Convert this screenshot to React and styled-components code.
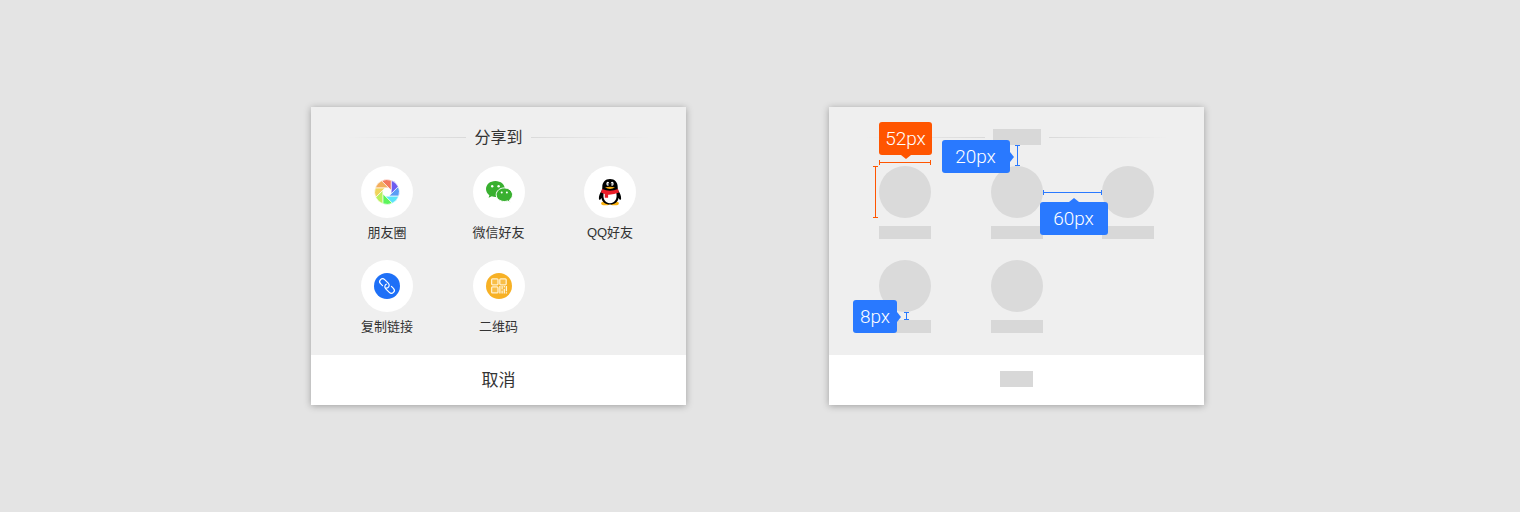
import React from "react";
import styled, { createGlobalStyle, css } from "styled-components";

const GlobalStyle = createGlobalStyle`
  *, *::before, *::after { box-sizing: border-box; }
  body {
    margin: 0;
    background: #e4e4e4;
    color: #333;
    font-family: "Liberation Sans", "Noto Sans CJK SC", sans-serif;
  }
`;

const BLUE = "#2979ff";
const ORANGE = "#ff5500";

const Page = styled.main`
  min-height: 100vh;
  padding: 24px 29px 24px 24px;
  display: flex;
  flex-wrap: wrap;
  align-items: center;
  align-content: center;
  justify-content: center;
  gap: 48px 143px;
`;

const Sheet = styled.section`
  flex: 0 1 375px;
  background: #efefef;
  box-shadow: 0 1px 7px rgba(0, 0, 0, 0.3);
`;

const SheetHeader = styled.header`
  display: flex;
  align-items: center;
  justify-content: center;
  gap: 8px;
  height: 59px;
  padding-top: 1px;
`;

const Rule = styled.span`
  flex: 0 1 120px;
  height: 1px;
  background: linear-gradient(
    ${(p) => (p.$side === "left" ? "to right" : "to left")},
    rgba(216, 216, 216, 0),
    #dadada
  );
`;

const Title = styled.h2`
  margin: 0;
  padding-top: 2px;
  font-size: 16px;
  line-height: 16px;
  font-weight: 400;
`;

const Items = styled.ul`
  list-style: none;
  margin: 0;
  padding: 0 50px 22px;
  display: grid;
  grid-template-columns: repeat(3, 52px);
  justify-content: space-between;
  row-gap: 21px;
`;

const column = css`
  display: flex;
  flex-direction: column;
  align-items: center;
  gap: 8px;
`;

const ShareButton = styled.button`
  ${column}
  width: 52px;
  padding: 0;
  border: 0;
  background: none;
  color: inherit;
  font: inherit;
  font-size: 13px;
  line-height: 13px;
  white-space: nowrap;
  cursor: pointer;
`;

const IconDisc = styled.span`
  width: 52px;
  height: 52px;
  border-radius: 50%;
  background: #fff;
  display: flex;
  align-items: center;
  justify-content: center;
`;

const Icon = styled.svg.attrs({ viewBox: "-14 -14 28 28", "aria-hidden": true })`
  display: block;
  width: 28px;
  height: 28px;
`;

const CancelButton = styled.button`
  display: block;
  width: 100%;
  height: 50px;
  padding: 2px 0 0;
  border: 0;
  background: #fff;
  color: inherit;
  font: inherit;
  font-size: 17px;
  line-height: 48px;
  cursor: pointer;
`;

const SpecItem = styled.li`
  ${column}
`;

const SpecFooter = styled.footer`
  height: 50px;
  padding-top: 16px;
  background: #fff;
  display: flex;
  justify-content: center;
  align-items: flex-start;
`;

const Block = styled.div`
  width: ${(p) => p.$w}px;
  height: ${(p) => p.$h}px;
  background: #d8d8d8;
`;

const Disc = styled.div`
  position: relative;
  width: 52px;
  height: 52px;
  border-radius: 50%;
  background: #dadada;
`;

/* Dimension line with end caps, laid over the wireframe */
const Measure = styled.span`
  position: absolute;
  z-index: 1;
  left: ${(p) => p.$x}px;
  top: ${(p) => p.$y}px;
  color: ${(p) => p.$color};
  ${(p) =>
    p.$vertical
      ? css`
          width: 5px;
          height: ${p.$length}px;
          border-top: 1px solid;
          border-bottom: 1px solid;
          background: linear-gradient(currentColor, currentColor) center / 1px 100% no-repeat;
        `
      : css`
          width: ${p.$length}px;
          height: 5px;
          border-left: 1px solid;
          border-right: 1px solid;
          background: linear-gradient(currentColor, currentColor) center / 100% 1px no-repeat;
        `}
`;

const arrows = {
  down: css`top: 100%; left: calc(50% - 5px); border-width: 4px 5px 0; border-top-color: currentColor;`,
  up: css`bottom: 100%; left: calc(50% - 5px); border-width: 0 5px 4px; border-bottom-color: currentColor;`,
  right: css`left: 100%; top: calc(50% - 5px); border-width: 5px 0 5px 4px; border-left-color: currentColor;`,
};

const Tag = styled.span`
  position: absolute;
  z-index: 2;
  left: ${(p) => p.$x}px;
  top: ${(p) => p.$y}px;
  width: ${(p) => p.$w}px;
  height: 33px;
  border-radius: 3px;
  background: ${(p) => p.$color};
  color: ${(p) => p.$color};
  &::after {
    content: "";
    position: absolute;
    border: 0 solid transparent;
    ${(p) => arrows[p.$arrow]}
  }
`;

const TagText = styled.span`
  display: block;
  color: #fff;
  font-family: Roboto, "Liberation Sans", sans-serif;
  font-weight: 300;
  font-size: 19px;
  line-height: 33px;
  text-align: center;
`;

const BLADES = ["#6c5cf0", "#5a9df5", "#5ae4f8", "#5cf55c", "#b9f05c", "#f0d45c", "#f3ad5c", "#f2785c"];

function MomentsIcon() {
  return (
    <Icon>
      {BLADES.map((fill, i) => (
        <path
          key={fill}
          d="M4.2 1.7V-11.7A12.4 12.4 0 0 1 11.2 -5.3Z"
          fill={fill}
          stroke="#fff"
          strokeWidth="0.6"
          transform={`rotate(${i * 45})`}
        />
      ))}
    </Icon>
  );
}

function WechatIcon() {
  return (
    <Icon>
      <g fill="#39b030">
        <path d="M-3.6 -11C-9 -11 -13 -7.4 -13 -3C-13 -.4 -11.7 1.8 -9.6 3.2L-10.4 5.8L-7.2 4.3C-6 4.7 -4.8 4.9 -3.6 4.9C1.8 4.9 5.9 1.4 5.9 -3C5.9 -7.4 1.8 -11 -3.6 -11Z" />
        <path
          stroke="#fff"
          strokeWidth="1"
          d="M5.3 -4.1C.8 -4.1 -2.8 -1.1 -2.8 2.7C-2.8 6.5 .8 9.5 5.3 9.5C6.5 9.5 7.6 9.3 8.6 8.9L11.2 10.3L10.5 8C12.3 6.8 13.5 4.9 13.5 2.7C13.5 -1.1 9.8 -4.1 5.3 -4.1Z"
        />
      </g>
      <g fill="#fff">
        <circle cx="-6.8" cy="-5.7" r="1.2" />
        <circle cx="-.4" cy="-5.7" r="1.2" />
        <circle cx="2.7" cy=".6" r="1" />
        <circle cx="7.9" cy=".6" r="1" />
      </g>
    </Icon>
  );
}

function QQIcon() {
  return (
    <Icon>
      <ellipse cx="-4.6" cy="11.4" rx="4.3" ry="1.9" fill="#fbb211" />
      <ellipse cx="4.6" cy="11.4" rx="4.3" ry="1.9" fill="#fbb211" />
      <path
        fill="#000"
        d="M0 -13C-4.8 -13 -7.7 -9.6 -7.7 -5C-7.7 -3.4 -7.8 -2.7 -8.4 -1.3C-10.2 1.3 -11.3 4.2 -11.1 6.4C-11 8.4 -9.9 8.3 -8.5 5.9C-8 10 -4.8 12.4 0 12.4S8 10 8.5 5.9C9.9 8.3 11 8.4 11.1 6.4C11.3 4.2 10.2 1.3 8.4 -1.3C7.8 -2.7 7.7 -3.4 7.7 -5C7.7 -9.6 4.8 -13 0 -13Z"
      />
      <path fill="#fff" d="M-6.3 1H6.3C7.5 6.2 5.2 11.2 0 11.2S-7.5 6.2 -6.3 1Z" />
      <ellipse cx="-2.2" cy="-8.2" rx="1.4" ry="2" fill="#fff" />
      <ellipse cx="2.2" cy="-8.2" rx="1.4" ry="2" fill="#fff" />
      <circle cx="-1.7" cy="-8" r=".7" />
      <circle cx="1.8" cy="-8" r=".7" />
      <path fill="#fbb211" d="M-5 -4.4Q0 -6.3 5 -4.4Q0 -1.8 -5 -4.4Z" />
      <path fill="#ea1c27" d="M-8 -3Q0 .6 8 -3L9 .6Q3.8 2.9 -1.9 2.7V5.8H-5.2V2.1Q-7.2 1.5 -9 .6Z" />
    </Icon>
  );
}

function LinkIcon() {
  return (
    <Icon>
      <circle r="13" fill="#1e70f7" />
      <g transform="rotate(45)" fill="none" stroke="#fff" strokeWidth="1.2" strokeLinecap="round">
        <path d="M-3.4 2.9H-6.2A2.9 2.9 0 0 1 -6.2 -2.9H-.8A2.9 2.9 0 0 1 .6 2.4" />
        <path d="M3.4 -2.9H6.2A2.9 2.9 0 0 1 6.2 2.9H.8A2.9 2.9 0 0 1 -.6 -2.4" strokeDasharray="22 2 20" />
      </g>
    </Icon>
  );
}

function QrIcon() {
  return (
    <Icon>
      <circle r="13" fill="#f7b125" />
      <g fill="#f8be48" stroke="#fff0cc" strokeWidth="1.3">
        <rect x="-7.4" y="-7.2" width="6.4" height="6" rx="1" />
        <rect x=".8" y="-7.2" width="6.4" height="6" rx="1" />
        <rect x="-7.4" y=".9" width="6.4" height="6" rx="1" />
      </g>
      <path
        d="M.9 0V7.6M3.1 0V3.4M3.1 4.6V7.6M5.3 0V1.6M5.3 2.8V7.6M7.4 0V5.2M7.4 6.3V7.6"
        fill="none"
        stroke="#fff5dc"
        strokeWidth="1.3"
      />
    </Icon>
  );
}

const TARGETS = [
  { label: "朋友圈", Glyph: MomentsIcon },
  { label: "微信好友", Glyph: WechatIcon },
  { label: "QQ好友", Glyph: QQIcon },
  { label: "复制链接", Glyph: LinkIcon },
  { label: "二维码", Glyph: QrIcon },
];

function Dimension({ line, tag, text, color }) {
  return (
    <>
      <Measure $color={color} $x={line.x} $y={line.y} $length={line.length} $vertical={line.vertical} />
      {tag && (
        <Tag $color={color} $x={tag.x} $y={tag.y} $w={tag.w} $arrow={tag.arrow}>
          <TagText>{text}</TagText>
        </Tag>
      )}
    </>
  );
}

/* Dimensions are relative to the disc that each one is attached to */
const SPECS = [
  [
    { color: ORANGE, text: "52px", line: { x: 0, y: -6, length: 52 }, tag: { x: 0, y: -44, w: 53, arrow: "down" } },
    { color: ORANGE, line: { x: -6, y: 0, length: 52, vertical: true } },
  ],
  [
    { color: BLUE, text: "20px", line: { x: 24, y: -21, length: 21, vertical: true }, tag: { x: -49, y: -26, w: 68, arrow: "right" } },
    { color: BLUE, text: "60px", line: { x: 52, y: 24, length: 59 }, tag: { x: 49, y: 36, w: 68, arrow: "up" } },
  ],
  [],
  [{ color: BLUE, text: "8px", line: { x: 25, y: 52, length: 8, vertical: true }, tag: { x: -26, y: 40, w: 44, arrow: "right" } }],
  [],
];

function ShareSheet() {
  return (
    <Sheet>
      <SheetHeader>
        <Rule $side="left" />
        <Title>分享到</Title>
        <Rule $side="right" />
      </SheetHeader>
      <Items>
        {TARGETS.map(({ label, Glyph }) => (
          <li key={label}>
            <ShareButton type="button">
              <IconDisc>
                <Glyph />
              </IconDisc>
              {label}
            </ShareButton>
          </li>
        ))}
      </Items>
      <CancelButton type="button">取消</CancelButton>
    </Sheet>
  );
}

function SpecSheet() {
  return (
    <Sheet>
      <SheetHeader>
        <Rule $side="left" />
        <Block $w={48} $h={16} />
        <Rule $side="right" />
      </SheetHeader>
      <Items>
        {SPECS.map((dimensions, i) => (
          <SpecItem key={i}>
            <Disc>
              {dimensions.map((d, n) => (
                <Dimension key={n} {...d} />
              ))}
            </Disc>
            <Block $w={52} $h={13} />
          </SpecItem>
        ))}
      </Items>
      <SpecFooter>
        <Block $w={33} $h={16} />
      </SpecFooter>
    </Sheet>
  );
}

export default function App() {
  return (
    <>
      <GlobalStyle />
      <Page>
        <ShareSheet />
        <SpecSheet />
      </Page>
    </>
  );
}
